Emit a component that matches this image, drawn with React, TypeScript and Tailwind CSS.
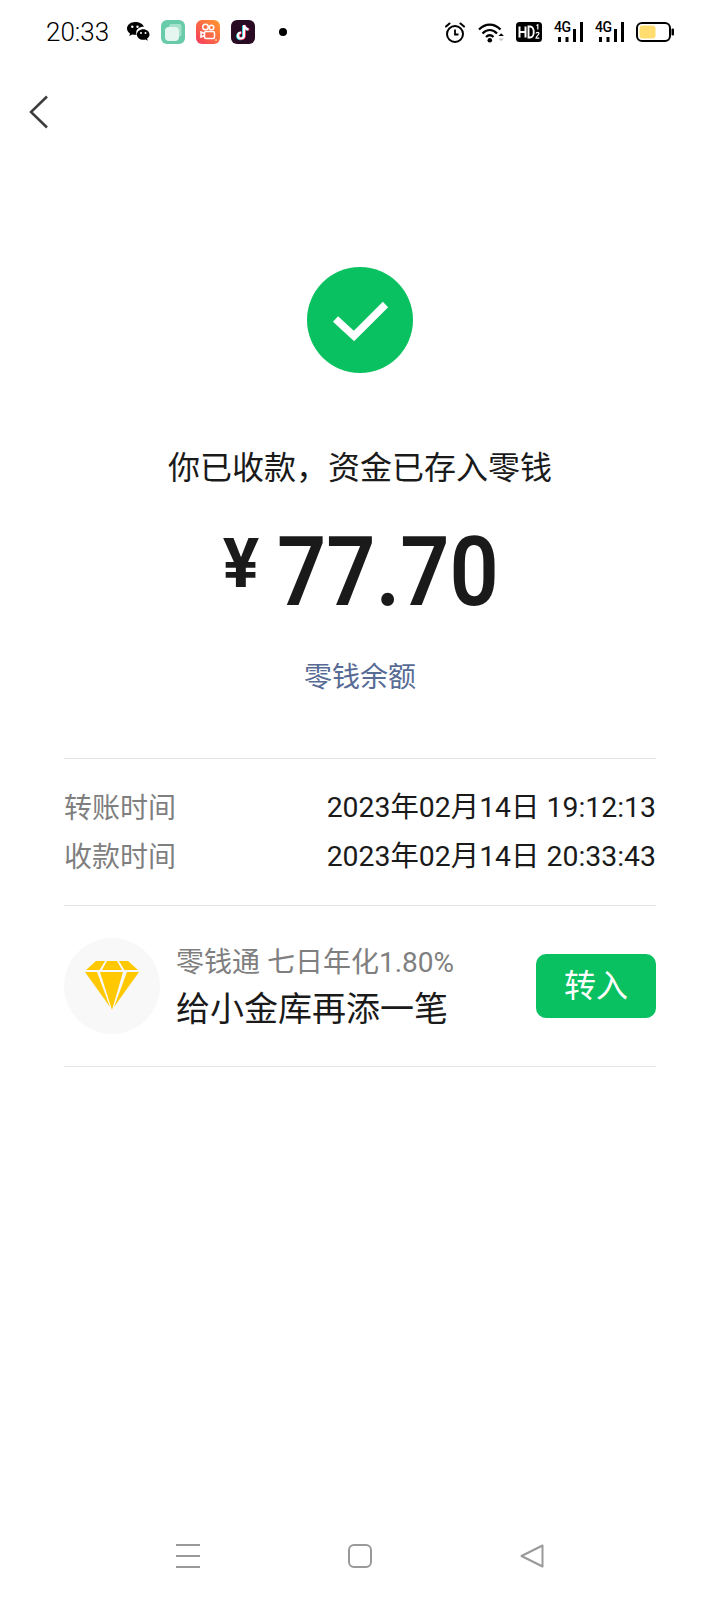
const fontStack = "font-['Roboto','Noto_Sans_CJK_SC',sans-serif]"

function WeChatIcon() {
  return (
    <svg width="24" height="22" viewBox="0 0 24 22" className="mt-[-1px]">
      <path d="M9 1C4.6 1 1 3.9 1 7.4c0 2 1.2 3.800 3 5l-.7 2.500 2.800-1.500c1 .3 2 .4 3 .4.500 0 1 0 1.500-.1-.3-.7-.4-1.400-.4-2.100 0-3.300 3.200-5.900 7.100-5.900h.6C16.900 3 13.300 1 9 1z" fill="#000" />
      <path d="M23.500 13.500c0-3-2.900-5.300-6.300-5.300s-6.300 2.300-6.300 5.300 2.900 5.300 6.300 5.300c.8 0 1.600-.1 2.300-.4l2.200 1.300-.6-2.100c1.500-1 2.400-2.400 2.400-4.100z" fill="#000" />
      <circle cx="6.300" cy="5.800" r="1.200" fill="#fff" />
      <circle cx="11.500" cy="5.800" r="1.200" fill="#fff" />
      <circle cx="15" cy="12" r="1" fill="#fff" />
      <circle cx="19.500" cy="12" r="1" fill="#fff" />
    </svg>
  )
}

function TilesIcon() {
  return (
    <svg width="24" height="24" viewBox="0 0 24 24">
      <rect width="24" height="24" rx="6" fill="#68cba9" />
      <path d="M8 6.500a2.500 2.500 0 0 1 2.500-2.500h8a2 2 0 0 1 2 2v8a2.500 2.500 0 0 1-2.500 2.500z" fill="#a5e2cc" />
      <rect x="4" y="7" width="14" height="14" rx="4" fill="#e4f6ef" />
    </svg>
  )
}

function KuaishouIcon() {
  return (
    <svg width="24" height="24" viewBox="0 0 24 24">
      <defs>
        <linearGradient id="ks" x1="1" y1="0" x2="0" y2="1">
          <stop offset="0" stopColor="#ff9a2e" />
          <stop offset="1" stopColor="#f6395e" />
        </linearGradient>
      </defs>
      <rect width="24" height="24" rx="6" fill="url(#ks)" />
      <g fill="none" stroke="#fff" strokeWidth="1.500">
        <circle cx="9.500" cy="7" r="2.800" />
        <circle cx="15.500" cy="7.500" r="2.300" />
        <rect x="8.500" y="11.500" width="10" height="7" rx="1.500" />
        <path d="M8.500 13.500l-3.500-1.500v5l3.500-1.500" />
      </g>
      <circle cx="20" cy="20" r=".8" fill="#fff" />
    </svg>
  )
}

function TikTokIcon() {
  return (
    <svg width="24" height="24" viewBox="0 0 24 24">
      <rect width="24" height="24" rx="6" fill="#2a0b24" />
      <path d="M13 5v10.500a3 3 0 1 1-3-3M13 5c.3 2.500 1.800 4 4.500 4.300" fill="none" stroke="#27d3dd" strokeWidth="2.400" transform="translate(-.8 .6)" />
      <path d="M13 5v10.500a3 3 0 1 1-3-3M13 5c.3 2.500 1.800 4 4.500 4.300" fill="none" stroke="#f0295a" strokeWidth="2.400" transform="translate(.8 .2)" />
      <path d="M13 5v10.500a3 3 0 1 1-3-3M13 5c.3 2.500 1.800 4 4.500 4.300" fill="none" stroke="#fff" strokeWidth="2.200" />
    </svg>
  )
}

function AlarmIcon() {
  return (
    <svg width="20" height="21" viewBox="0 0 20 21" fill="none" stroke="#000" strokeWidth="2">
      <circle cx="10" cy="12" r="8" />
      <path d="M10 7.500v5h3.500" strokeWidth="1.800" />
      <path d="M1 4.500l3.500-3M19 4.500l-3.500-3" strokeLinecap="round" />
    </svg>
  )
}

function WifiIcon() {
  return (
    <svg width="28" height="21" viewBox="0 0 28 21" fill="none">
      <path d="M1 7.500c6.500-6.500 15-6.500 21.500 0M4.500 11.500c4.500-4.500 10-4.500 14.500 0M8 15c2.500-2.300 5-2.300 7.500 0" stroke="#000" strokeWidth="2.300" />
      <circle cx="11.800" cy="18.300" r="2.300" fill="#000" />
      <path d="M20.500 14l2.700-2.700 2.700 2.700z" fill="#000" />
      <path d="M20.500 16.500l2.700 2.700 2.700-2.700z" fill="#c4c4c4" />
    </svg>
  )
}

function HdIcon() {
  return (
    <svg width="26" height="20" viewBox="0 0 26 20">
      <rect width="26" height="20" rx="3.500" fill="#000" />
      <path d="M3.500 4.500v11M9.500 4.500v11M3.500 10h6" stroke="#fff" strokeWidth="2" fill="none" />
      <path d="M12.500 4.500v11h1.500c5 0 5-11 0-11z" stroke="#fff" strokeWidth="1.900" fill="none" />
      <path d="M20.500 3.500l1.300-.7v4.600" stroke="#fff" strokeWidth="1.200" fill="none" />
      <path d="M20 11.500c.3-1.500 3-1.500 3 0 0 1.300-3 2.800-3 4.700h3.300" stroke="#fff" strokeWidth="1.200" fill="none" />
    </svg>
  )
}

function SignalIcon() {
  return (
    <div className="relative h-[20px] w-[29px]">
      <span className="absolute left-0 top-[-3px] text-[14px] font-medium leading-[16px] tracking-[-0.5px] text-black font-['Roboto',sans-serif]">
        4G
      </span>
      <svg width="29" height="20" viewBox="0 0 29 20" className="absolute left-0 top-0">
        <rect x="4" y="15" width="3" height="5" fill="#000" />
        <rect x="11.500" y="15" width="3" height="5" fill="#000" />
        <rect x="19" y="7" width="3" height="13" fill="#000" />
        <rect x="26" y="0" width="3" height="20" fill="#000" />
      </svg>
    </div>
  )
}

function BatteryIcon() {
  return (
    <svg width="38" height="20" viewBox="0 0 38 20">
      <rect x="1" y="1" width="33" height="18" rx="5" fill="none" stroke="#000" strokeWidth="2" />
      <rect x="3.500" y="3.500" width="16" height="13" rx="3" fill="#ffdd6e" />
      <rect x="35.500" y="6.500" width="2.500" height="7" rx="1" fill="#000" />
    </svg>
  )
}

function StatusBar() {
  return (
    <div className="flex h-[64px] items-center justify-between pl-[46px] pr-[46px]">
      <div className="flex items-center">
        <span className="w-[80px] text-[26px] font-light leading-none text-black">20:33</span>
        <div className="flex items-center gap-[11px]">
          <WeChatIcon />
          <TilesIcon />
          <KuaishouIcon />
          <TikTokIcon />
        </div>
        <span className="ml-[24px] h-[8px] w-[8px] rounded-full bg-black" />
      </div>
      <div className="flex items-center">
        <AlarmIcon />
        <div className="ml-[13px]"><WifiIcon /></div>
        <div className="ml-[10px]"><HdIcon /></div>
        <div className="ml-[12px]"><SignalIcon /></div>
        <div className="ml-[12px]"><SignalIcon /></div>
        <div className="ml-[12px]"><BatteryIcon /></div>
      </div>
    </div>
  )
}

const timeRows = [
  { label: '转账时间', value: '2023年02月14日 19:12:13' },
  { label: '收款时间', value: '2023年02月14日 20:33:43' },
]

function DiamondIcon() {
  return (
    <svg width="54" height="50" viewBox="0 0 54 50" fill="#ffc800">
      <path d="M11 0h9l-5.500 9H1z" />
      <path d="M22 0h10l5 9H17z" />
      <path d="M34 0h9l10 9H39.500z" />
      <path d="M0 11h12l13 35z" />
      <path d="M15 11h23L27 49z" />
      <path d="M42 11h12L29 46z" />
    </svg>
  )
}

function NavBar() {
  return (
    <div className="flex h-[56px] items-start justify-between pl-[176px] pr-[176px]">
      <svg width="24" height="24" viewBox="0 0 24 24" stroke="#999" strokeWidth="2">
        <path d="M0 1h24M0 12h24M0 23h24" />
      </svg>
      <svg width="24" height="24" viewBox="0 0 24 24" fill="none" stroke="#999" strokeWidth="2">
        <rect x="1" y="1" width="22" height="22" rx="5" />
      </svg>
      <svg width="24" height="24" viewBox="0 0 24 24" fill="none" stroke="#999" strokeWidth="2" strokeLinejoin="round">
        <path d="M22.500 1.500L1.500 12l21 10.500z" />
      </svg>
    </div>
  )
}

export default function App() {
  return (
    <div className={`flex min-h-[1600px] flex-col bg-white ${fontStack}`}>
      <StatusBar />

      <button className="ml-[29px] mt-[31px] w-fit">
        <svg width="20" height="34" viewBox="0 0 20 34" fill="none" stroke="#3c3c3c" strokeWidth="2.500" className="block">
          <path d="M18 1.500L2 17l16 15.500" />
        </svg>
      </button>

      <div className="mt-[138px] flex flex-col items-center">
        <div className="flex h-[106px] w-[106px] items-center justify-center rounded-full bg-[#09c160]">
          <svg width="58" height="42" viewBox="0 0 58 42" fill="none" stroke="#fff" strokeWidth="7.500">
            <path d="M4.500 20l18.500 17L54.500 5.500" />
          </svg>
        </div>
        <p className="mt-[77px] text-[32px] leading-[36px] text-[#1a1a1a]">你已收款，资金已存入零钱</p>
        <div className="mt-[36px] flex h-[100px] items-center text-[#1a1a1a]">
          <span className="mb-[16px] mr-[18px] text-[68px] font-bold leading-none">¥</span>
          <span className="w-[220px] origin-left scale-x-[0.89] text-[97px] font-semibold leading-none">77.70</span>
        </div>
        <p className="mt-[38px] text-[28px] leading-[36px] text-[#576b95]">零钱余额</p>
      </div>

      <div className="mx-[64px] mt-[62px] flex flex-col">
        <div className="border-t border-[#e5e5e5] pb-[23px] pt-[25px]">
          {timeRows.map((row) => (
            <div key={row.label} className="flex h-[49px] items-center justify-between">
              <span className="text-[28px] text-[#7f7f7f]">{row.label}</span>
              <span className="text-[28.4px] text-[#1a1a1a]">{row.value}</span>
            </div>
          ))}
        </div>

        <div className="flex items-center border-y border-[#e5e5e5] py-[32px]">
          <div className="flex h-[96px] w-[96px] shrink-0 items-center justify-center rounded-full bg-[#f8f8f8]">
            <DiamondIcon />
          </div>
          <div className="ml-[16px] flex-1">
            <p className="text-[28px] leading-[46px] text-[#7f7f7f]">零钱通 七日年化1.80%</p>
            <p className="text-[34px] leading-[46px] text-[#1a1a1a]">给小金库再添一笔</p>
          </div>
          <button className="h-[64px] w-[120px] rounded-[10px] bg-[#09c160] text-[32px] text-white">转入</button>
        </div>
      </div>

      <div className="flex-1" />
      <NavBar />
    </div>
  )
}
